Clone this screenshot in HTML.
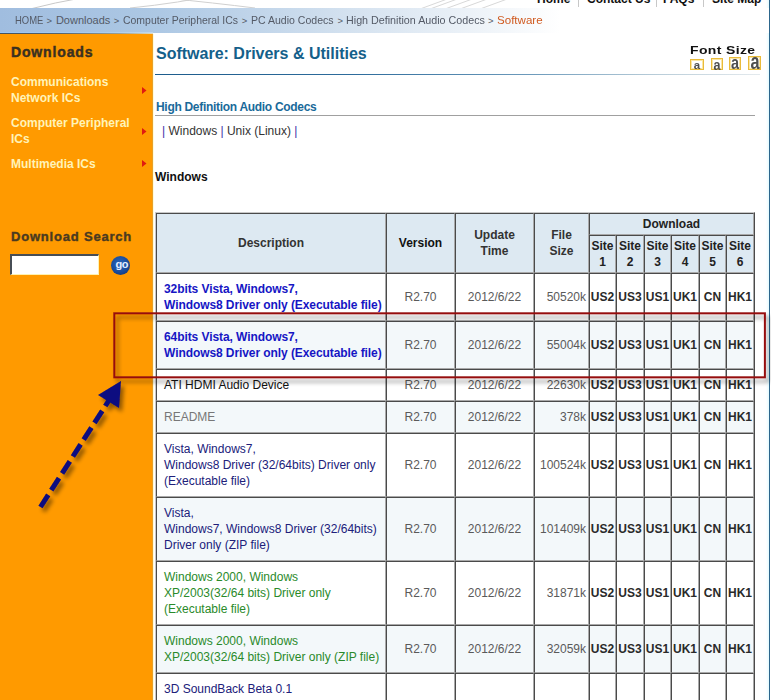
<!DOCTYPE html>
<html><head><meta charset="utf-8">
<style>
html,body{margin:0;padding:0;background:#fff;}
body{width:771px;height:700px;overflow:hidden;position:relative;font-family:"Liberation Sans",sans-serif;}
.a{position:absolute;white-space:nowrap;}
.bc{top:13px;font-size:11px;line-height:14px;color:#545a66;}
.c{position:absolute;box-sizing:border-box;border-style:solid;border-width:1px;border-color:#4a4a4a #a9a9a9 #a9a9a9 #4a4a4a;display:flex;align-items:center;justify-content:center;overflow:hidden;}
.hd{font-size:12px;font-weight:bold;line-height:16px;text-align:center;white-space:nowrap;}
.bd{font-size:12px;line-height:16px;white-space:nowrap;}
.g{color:#5a5a5a;}
.st{font-size:12px;font-weight:bold;line-height:16px;color:#2a2a2a;}
#side{position:absolute;left:0;top:34px;width:153px;height:666px;background:#ff9a00;}
.menu{position:absolute;left:11px;font-size:12px;font-weight:bold;line-height:16px;color:#fff3b8;white-space:nowrap;}
.tri{position:absolute;left:142px;width:0;height:0;border-top:3.5px solid transparent;border-bottom:3.5px solid transparent;border-left:4px solid #e02010;}
</style></head>
<body>
<!-- decorative top curves -->
<svg class="a" style="left:0;top:0" width="771" height="9" viewBox="0 0 771 9">
  <path d="M30 9 Q 80 -4 140 -10" stroke="#c8c8c8" stroke-width="1" fill="none"/>
  <path d="M130 8 Q 180 3 220 -6" stroke="#d0d0d0" stroke-width="1" fill="none"/>
  <path d="M165 -2 Q 215 3 255 8" stroke="#d0d0d0" stroke-width="1" fill="none"/>
  <path d="M420 9 L 450 -2 M430 9 L 460 -2 M445 9 L 475 -2 M460 9 L 490 -2 M480 9 L 510 -2" stroke="#d8d8d8" stroke-width="1" fill="none"/>
</svg>
<!-- top nav -->
<div class="a" style="left:537px;top:-8px;font-size:12px;font-weight:bold;line-height:14px;color:#111;">Home</div>
<div class="a" style="left:578px;top:0;width:1px;height:7px;background:#c8c8c8"></div>
<div class="a" style="left:587px;top:-8px;font-size:12px;font-weight:bold;line-height:14px;color:#111;">Contact Us</div>
<div class="a" style="left:656px;top:0;width:1px;height:7px;background:#c8c8c8"></div>
<div class="a" style="left:663px;top:-8px;font-size:12px;font-weight:bold;line-height:14px;color:#111;">FAQs</div>
<div class="a" style="left:703px;top:0;width:1px;height:7px;background:#c8c8c8"></div>
<div class="a" style="left:712px;top:-8px;font-size:12px;font-weight:bold;line-height:14px;color:#111;">Site Map</div>
<!-- right blue rule -->
<div class="a" style="left:766px;top:0;width:3px;height:700px;background:linear-gradient(90deg,#ffffff,#e4fbff)"></div>
<div class="a" style="left:769px;top:0;width:1px;height:700px;background:#2c668c"></div>
<!-- breadcrumb bar -->
<div class="a" style="left:0;top:8px;width:769px;height:25px;background:linear-gradient(90deg,#a0bddf 0px,#adc8e4 160px,#d6e3f0 360px,#f2f6fa 500px,#ffffff 560px);"></div>
<div class="a" style="left:0;top:32px;width:153px;height:1px;background:linear-gradient(90deg,#98c6f4 0,#a8cdf0 100px,#c0d8ee 153px)"></div>
<div class="a" style="left:0;top:33px;width:153px;height:1px;background:linear-gradient(90deg,#46525c 0,#58646c 60px,#9aa098 120px,#e0dcc0 153px)"></div>
<div class="a bc" style="left:15.0px;transform:scaleX(0.86);transform-origin:left;">HOME</div>
<div class="a bc" style="left:55.9px;transform:scaleX(1.0);transform-origin:left;">Downloads</div>
<div class="a bc" style="left:122.7px;transform:scaleX(0.95);transform-origin:left;">Computer Peripheral ICs</div>
<div class="a bc" style="left:250.5px;transform:scaleX(0.958);transform-origin:left;">PC Audio Codecs</div>
<div class="a bc" style="left:346.2px;transform:scaleX(0.975);transform-origin:left;">High Definition Audio Codecs</div>
<div class="a bc" style="left:46.4px;top:14px;font-size:9.5px;">&gt;</div>
<div class="a bc" style="left:113.7px;top:14px;font-size:9.5px;">&gt;</div>
<div class="a bc" style="left:241.7px;top:14px;font-size:9.5px;">&gt;</div>
<div class="a bc" style="left:337.4px;top:14px;font-size:9.5px;">&gt;</div>
<div class="a bc" style="left:487.9px;top:14px;font-size:9.5px;">&gt;</div>
<div class="a bc" style="left:496.8px;color:#d05a20;transform:scaleX(1.05);transform-origin:left;">Software</div>

<!-- sidebar -->
<div id="side"></div>
<div class="a" style="left:152px;top:34px;width:1px;height:666px;background:#e8a02a"></div>
<div class="a" style="left:153px;top:34px;width:1px;height:666px;background:#fffbd8"></div>
<div class="a" style="left:11px;top:44px;font-size:14px;font-weight:bold;line-height:16px;color:#3a3020;letter-spacing:0.85px;-webkit-text-stroke:0.45px #3a3020;">Downloads</div>
<div class="menu" style="top:74px">Communications<br>Network ICs</div>
<div class="menu" style="top:115px">Computer Peripheral<br>ICs</div>
<div class="menu" style="top:156px">Multimedia ICs</div>
<svg class="a" style="left:0;top:0" width="153" height="180"><polygon points="142,87 146.5,90.5 142,94" fill="#e01a10"/><polygon points="142,128 146.5,131.5 142,135" fill="#e01a10"/><polygon points="142,160 146.5,163.5 142,167" fill="#e01a10"/></svg>
<div class="a" style="left:11px;top:229px;font-size:13px;font-weight:bold;line-height:16px;color:#4a3a20;letter-spacing:0.8px;-webkit-text-stroke:0.4px #4a3a20;">Download Search</div>
<div class="a" style="left:10px;top:254px;width:89px;height:21px;box-sizing:border-box;background:#fff;border-style:solid;border-width:2px 1px 1px 2px;border-color:#474d55 #fff2b0 #fff2b0 #474d55;"></div>
<div class="a" style="left:111px;top:255.5px;width:19px;height:19px;border-radius:50%;background:radial-gradient(circle at 45% 40%,#2a66ba 0,#1a4c9c 55%,#0a2a62 100%);"></div>
<div class="a" style="left:115.5px;top:257px;font-size:11px;font-weight:bold;line-height:14px;color:#e4eeff;letter-spacing:-0.4px;">go</div>

<!-- main heading -->
<div class="a" style="left:156px;top:45px;font-size:16px;font-weight:bold;line-height:18px;color:#14608a;">Software: Drivers &amp; Utilities</div>
<div class="a" style="left:155px;top:74px;width:605px;height:1px;background:linear-gradient(90deg,#1d5c8c 0,#2e6c9c 200px,#6f9cbc 380px,#b8ccd8 500px,#e4eaee 605px);"></div>
<div class="a" style="left:690px;top:44px;font-size:11px;font-weight:bold;line-height:13px;color:#111;letter-spacing:0.3px;transform:scaleX(1.27);transform-origin:left;">Font Size</div>
<div class="a" style="left:690px;top:59px;width:14px;height:11px;box-sizing:border-box;border:1px solid #e9bb3a;box-shadow:inset 0 0 0 1px #fbe6a4;background:#fff;"></div>
<div class="a" style="left:711px;top:58px;width:12px;height:12px;box-sizing:border-box;border:1px solid #e9bb3a;box-shadow:inset 0 0 0 1px #fbe6a4;background:#fff;"></div>
<div class="a" style="left:729px;top:57px;width:12px;height:13px;box-sizing:border-box;border:1px solid #e9bb3a;box-shadow:inset 0 0 0 1px #fbe6a4;background:#fff;"></div>
<div class="a" style="left:748px;top:56px;width:13px;height:14px;box-sizing:border-box;border:1px solid #e9bb3a;box-shadow:inset 0 0 0 1px #fbe6a4;background:#fff;"></div>
<div class="a" style="left:681.5px;top:60.7px;width:30px;text-align:center;font-size:10px;font-weight:bold;line-height:1;color:#4e4e4e;transform:scaleX(1.15);">a</div>
<div class="a" style="left:702px;top:56.5px;width:30px;text-align:center;font-size:15px;font-weight:bold;line-height:1;color:#4e4e4e;transform:scaleX(0.84);">a</div>
<div class="a" style="left:720px;top:53.1px;width:30px;text-align:center;font-size:19px;font-weight:bold;line-height:1;color:#4e4e4e;transform:scaleX(0.76);">a</div>
<div class="a" style="left:739.5px;top:50.6px;width:30px;text-align:center;font-size:22px;font-weight:bold;line-height:1;color:#4e4e4e;transform:scaleX(0.74);">a</div>

<div class="a" style="left:156px;top:99px;font-size:12px;font-weight:bold;line-height:16px;color:#1a6a9a;letter-spacing:-0.3px;">High Definition Audio Codecs</div>
<div class="a" style="left:155px;top:115px;width:600px;height:1px;background:#a0a0a0"></div>
<div class="a" style="left:162px;top:123px;font-size:12px;line-height:16px;color:#333;"><span style="color:#4030a8">|</span> Windows <span style="color:#4030a8">|</span> Unix (Linux) <span style="color:#4030a8">|</span></div>
<div class="a" style="left:155px;top:169px;font-size:12px;font-weight:bold;line-height:16px;color:#111;">Windows</div>

<!-- table -->
<div class="a" style="left:155px;top:212px;width:600px;height:500px;box-sizing:border-box;border-style:solid;border-width:1px;border-color:#c8c8c8 #4a4a4a #4a4a4a #c8c8c8;"></div>
<div class="c" style="left:156px;top:213px;width:230px;height:60px;background:#dde9f2;"><span class="hd" style="color:#333">Description</span></div>
<div class="c" style="left:386px;top:213px;width:69px;height:60px;background:#dde9f2;"><span class="hd" style="color:#111">Version</span></div>
<div class="c" style="left:455px;top:213px;width:79px;height:60px;background:#dde9f2;"><span class="hd" style="color:#333">Update<br>Time</span></div>
<div class="c" style="left:534px;top:213px;width:55px;height:60px;background:#dde9f2;"><span class="hd" style="color:#333">File<br>Size</span></div>
<div class="c" style="left:589px;top:213px;width:165px;height:22px;background:#dde9f2;"><span class="hd" style="color:#222">Download</span></div>
<div class="c" style="left:589px;top:235px;width:27px;height:38px;background:#dde9f2;"><span class="hd" style="color:#222">Site<br>1</span></div>
<div class="c" style="left:616px;top:235px;width:28px;height:38px;background:#dde9f2;"><span class="hd" style="color:#222">Site<br>2</span></div>
<div class="c" style="left:644px;top:235px;width:27px;height:38px;background:#dde9f2;"><span class="hd" style="color:#222">Site<br>3</span></div>
<div class="c" style="left:671px;top:235px;width:28px;height:38px;background:#dde9f2;"><span class="hd" style="color:#222">Site<br>4</span></div>
<div class="c" style="left:699px;top:235px;width:27px;height:38px;background:#dde9f2;"><span class="hd" style="color:#222">Site<br>5</span></div>
<div class="c" style="left:726px;top:235px;width:28px;height:38px;background:#dde9f2;"><span class="hd" style="color:#222">Site<br>6</span></div>
<div class="c" style="left:156px;top:273px;width:230px;height:48px;background:#ffffff;justify-content:flex-start;padding-left:7px;"><span class="bd" style="color:#1616c4;font-weight:bold;letter-spacing:-0.08px">32bits Vista, Windows7,<br>Windows8 Driver only (Executable file)</span></div>
<div class="c" style="left:386px;top:273px;width:69px;height:48px;background:#ffffff;"><span class="bd g">R2.70</span></div>
<div class="c" style="left:455px;top:273px;width:79px;height:48px;background:#ffffff;"><span class="bd g">2012/6/22</span></div>
<div class="c" style="left:534px;top:273px;width:55px;height:48px;background:#ffffff;justify-content:flex-end;padding-right:2px;"><span class="bd g">50520k</span></div>
<div class="c" style="left:589px;top:273px;width:27px;height:48px;background:#ffffff;"><span class="st">US2</span></div>
<div class="c" style="left:616px;top:273px;width:28px;height:48px;background:#ffffff;"><span class="st">US3</span></div>
<div class="c" style="left:644px;top:273px;width:27px;height:48px;background:#ffffff;"><span class="st">US1</span></div>
<div class="c" style="left:671px;top:273px;width:28px;height:48px;background:#ffffff;"><span class="st">UK1</span></div>
<div class="c" style="left:699px;top:273px;width:27px;height:48px;background:#ffffff;"><span class="st">CN</span></div>
<div class="c" style="left:726px;top:273px;width:28px;height:48px;background:#ffffff;"><span class="st">HK1</span></div>
<div class="c" style="left:156px;top:321px;width:230px;height:48px;background:#f3f8fa;justify-content:flex-start;padding-left:7px;"><span class="bd" style="color:#1616c4;font-weight:bold;letter-spacing:-0.08px">64bits Vista, Windows7,<br>Windows8 Driver only (Executable file)</span></div>
<div class="c" style="left:386px;top:321px;width:69px;height:48px;background:#f3f8fa;"><span class="bd g">R2.70</span></div>
<div class="c" style="left:455px;top:321px;width:79px;height:48px;background:#f3f8fa;"><span class="bd g">2012/6/22</span></div>
<div class="c" style="left:534px;top:321px;width:55px;height:48px;background:#f3f8fa;justify-content:flex-end;padding-right:2px;"><span class="bd g">55004k</span></div>
<div class="c" style="left:589px;top:321px;width:27px;height:48px;background:#f3f8fa;"><span class="st">US2</span></div>
<div class="c" style="left:616px;top:321px;width:28px;height:48px;background:#f3f8fa;"><span class="st">US3</span></div>
<div class="c" style="left:644px;top:321px;width:27px;height:48px;background:#f3f8fa;"><span class="st">US1</span></div>
<div class="c" style="left:671px;top:321px;width:28px;height:48px;background:#f3f8fa;"><span class="st">UK1</span></div>
<div class="c" style="left:699px;top:321px;width:27px;height:48px;background:#f3f8fa;"><span class="st">CN</span></div>
<div class="c" style="left:726px;top:321px;width:28px;height:48px;background:#f3f8fa;"><span class="st">HK1</span></div>
<div class="c" style="left:156px;top:369px;width:230px;height:32px;background:#ffffff;justify-content:flex-start;padding-left:7px;"><span class="bd" style="color:#111">ATI HDMI Audio Device</span></div>
<div class="c" style="left:386px;top:369px;width:69px;height:32px;background:#ffffff;"><span class="bd g">R2.70</span></div>
<div class="c" style="left:455px;top:369px;width:79px;height:32px;background:#ffffff;"><span class="bd g">2012/6/22</span></div>
<div class="c" style="left:534px;top:369px;width:55px;height:32px;background:#ffffff;justify-content:flex-end;padding-right:2px;"><span class="bd g">22630k</span></div>
<div class="c" style="left:589px;top:369px;width:27px;height:32px;background:#ffffff;"><span class="st">US2</span></div>
<div class="c" style="left:616px;top:369px;width:28px;height:32px;background:#ffffff;"><span class="st">US3</span></div>
<div class="c" style="left:644px;top:369px;width:27px;height:32px;background:#ffffff;"><span class="st">US1</span></div>
<div class="c" style="left:671px;top:369px;width:28px;height:32px;background:#ffffff;"><span class="st">UK1</span></div>
<div class="c" style="left:699px;top:369px;width:27px;height:32px;background:#ffffff;"><span class="st">CN</span></div>
<div class="c" style="left:726px;top:369px;width:28px;height:32px;background:#ffffff;"><span class="st">HK1</span></div>
<div class="c" style="left:156px;top:401px;width:230px;height:32px;background:#f3f8fa;justify-content:flex-start;padding-left:7px;"><span class="bd" style="color:#777">README</span></div>
<div class="c" style="left:386px;top:401px;width:69px;height:32px;background:#f3f8fa;"><span class="bd g">R2.70</span></div>
<div class="c" style="left:455px;top:401px;width:79px;height:32px;background:#f3f8fa;"><span class="bd g">2012/6/22</span></div>
<div class="c" style="left:534px;top:401px;width:55px;height:32px;background:#f3f8fa;justify-content:flex-end;padding-right:2px;"><span class="bd g">378k</span></div>
<div class="c" style="left:589px;top:401px;width:27px;height:32px;background:#f3f8fa;"><span class="st">US2</span></div>
<div class="c" style="left:616px;top:401px;width:28px;height:32px;background:#f3f8fa;"><span class="st">US3</span></div>
<div class="c" style="left:644px;top:401px;width:27px;height:32px;background:#f3f8fa;"><span class="st">US1</span></div>
<div class="c" style="left:671px;top:401px;width:28px;height:32px;background:#f3f8fa;"><span class="st">UK1</span></div>
<div class="c" style="left:699px;top:401px;width:27px;height:32px;background:#f3f8fa;"><span class="st">CN</span></div>
<div class="c" style="left:726px;top:401px;width:28px;height:32px;background:#f3f8fa;"><span class="st">HK1</span></div>
<div class="c" style="left:156px;top:433px;width:230px;height:64px;background:#ffffff;justify-content:flex-start;padding-left:7px;"><span class="bd" style="color:#20207a">Vista, Windows7,<br>Windows8 Driver (32/64bits) Driver only<br>(Executable file)</span></div>
<div class="c" style="left:386px;top:433px;width:69px;height:64px;background:#ffffff;"><span class="bd g">R2.70</span></div>
<div class="c" style="left:455px;top:433px;width:79px;height:64px;background:#ffffff;"><span class="bd g">2012/6/22</span></div>
<div class="c" style="left:534px;top:433px;width:55px;height:64px;background:#ffffff;justify-content:flex-end;padding-right:2px;"><span class="bd g">100524k</span></div>
<div class="c" style="left:589px;top:433px;width:27px;height:64px;background:#ffffff;"><span class="st">US2</span></div>
<div class="c" style="left:616px;top:433px;width:28px;height:64px;background:#ffffff;"><span class="st">US3</span></div>
<div class="c" style="left:644px;top:433px;width:27px;height:64px;background:#ffffff;"><span class="st">US1</span></div>
<div class="c" style="left:671px;top:433px;width:28px;height:64px;background:#ffffff;"><span class="st">UK1</span></div>
<div class="c" style="left:699px;top:433px;width:27px;height:64px;background:#ffffff;"><span class="st">CN</span></div>
<div class="c" style="left:726px;top:433px;width:28px;height:64px;background:#ffffff;"><span class="st">HK1</span></div>
<div class="c" style="left:156px;top:497px;width:230px;height:64px;background:#f3f8fa;justify-content:flex-start;padding-left:7px;"><span class="bd" style="color:#20207a">Vista,<br>Windows7, Windows8 Driver (32/64bits)<br>Driver only (ZIP file)</span></div>
<div class="c" style="left:386px;top:497px;width:69px;height:64px;background:#f3f8fa;"><span class="bd g">R2.70</span></div>
<div class="c" style="left:455px;top:497px;width:79px;height:64px;background:#f3f8fa;"><span class="bd g">2012/6/22</span></div>
<div class="c" style="left:534px;top:497px;width:55px;height:64px;background:#f3f8fa;justify-content:flex-end;padding-right:2px;"><span class="bd g">101409k</span></div>
<div class="c" style="left:589px;top:497px;width:27px;height:64px;background:#f3f8fa;"><span class="st">US2</span></div>
<div class="c" style="left:616px;top:497px;width:28px;height:64px;background:#f3f8fa;"><span class="st">US3</span></div>
<div class="c" style="left:644px;top:497px;width:27px;height:64px;background:#f3f8fa;"><span class="st">US1</span></div>
<div class="c" style="left:671px;top:497px;width:28px;height:64px;background:#f3f8fa;"><span class="st">UK1</span></div>
<div class="c" style="left:699px;top:497px;width:27px;height:64px;background:#f3f8fa;"><span class="st">CN</span></div>
<div class="c" style="left:726px;top:497px;width:28px;height:64px;background:#f3f8fa;"><span class="st">HK1</span></div>
<div class="c" style="left:156px;top:561px;width:230px;height:64px;background:#ffffff;justify-content:flex-start;padding-left:7px;"><span class="bd" style="color:#2a8a2a">Windows 2000, Windows<br>XP/2003(32/64 bits) Driver only<br>(Executable file)</span></div>
<div class="c" style="left:386px;top:561px;width:69px;height:64px;background:#ffffff;"><span class="bd g">R2.70</span></div>
<div class="c" style="left:455px;top:561px;width:79px;height:64px;background:#ffffff;"><span class="bd g">2012/6/22</span></div>
<div class="c" style="left:534px;top:561px;width:55px;height:64px;background:#ffffff;justify-content:flex-end;padding-right:2px;"><span class="bd g">31871k</span></div>
<div class="c" style="left:589px;top:561px;width:27px;height:64px;background:#ffffff;"><span class="st">US2</span></div>
<div class="c" style="left:616px;top:561px;width:28px;height:64px;background:#ffffff;"><span class="st">US3</span></div>
<div class="c" style="left:644px;top:561px;width:27px;height:64px;background:#ffffff;"><span class="st">US1</span></div>
<div class="c" style="left:671px;top:561px;width:28px;height:64px;background:#ffffff;"><span class="st">UK1</span></div>
<div class="c" style="left:699px;top:561px;width:27px;height:64px;background:#ffffff;"><span class="st">CN</span></div>
<div class="c" style="left:726px;top:561px;width:28px;height:64px;background:#ffffff;"><span class="st">HK1</span></div>
<div class="c" style="left:156px;top:625px;width:230px;height:48px;background:#f3f8fa;justify-content:flex-start;padding-left:7px;"><span class="bd" style="color:#2a8a2a">Windows 2000, Windows<br>XP/2003(32/64 bits) Driver only (ZIP file)</span></div>
<div class="c" style="left:386px;top:625px;width:69px;height:48px;background:#f3f8fa;"><span class="bd g">R2.70</span></div>
<div class="c" style="left:455px;top:625px;width:79px;height:48px;background:#f3f8fa;"><span class="bd g">2012/6/22</span></div>
<div class="c" style="left:534px;top:625px;width:55px;height:48px;background:#f3f8fa;justify-content:flex-end;padding-right:2px;"><span class="bd g">32059k</span></div>
<div class="c" style="left:589px;top:625px;width:27px;height:48px;background:#f3f8fa;"><span class="st">US2</span></div>
<div class="c" style="left:616px;top:625px;width:28px;height:48px;background:#f3f8fa;"><span class="st">US3</span></div>
<div class="c" style="left:644px;top:625px;width:27px;height:48px;background:#f3f8fa;"><span class="st">US1</span></div>
<div class="c" style="left:671px;top:625px;width:28px;height:48px;background:#f3f8fa;"><span class="st">UK1</span></div>
<div class="c" style="left:699px;top:625px;width:27px;height:48px;background:#f3f8fa;"><span class="st">CN</span></div>
<div class="c" style="left:726px;top:625px;width:28px;height:48px;background:#f3f8fa;"><span class="st">HK1</span></div>
<div class="c" style="left:156px;top:673px;width:230px;height:48px;background:#ffffff;justify-content:flex-start;padding-left:7px;"><span class="bd" style="color:#20207a">3D SoundBack Beta 0.1<br>&nbsp;</span></div>
<div class="c" style="left:386px;top:673px;width:69px;height:48px;background:#ffffff;"></div>
<div class="c" style="left:455px;top:673px;width:79px;height:48px;background:#ffffff;"></div>
<div class="c" style="left:534px;top:673px;width:55px;height:48px;background:#ffffff;"></div>
<div class="c" style="left:589px;top:673px;width:27px;height:48px;background:#ffffff;"></div>
<div class="c" style="left:616px;top:673px;width:28px;height:48px;background:#ffffff;"></div>
<div class="c" style="left:644px;top:673px;width:27px;height:48px;background:#ffffff;"></div>
<div class="c" style="left:671px;top:673px;width:28px;height:48px;background:#ffffff;"></div>
<div class="c" style="left:699px;top:673px;width:27px;height:48px;background:#ffffff;"></div>
<div class="c" style="left:726px;top:673px;width:28px;height:48px;background:#ffffff;"></div>

<!-- overlay: red rectangle + arrow -->
<svg class="a" style="left:0;top:0" width="771" height="700" viewBox="0 0 771 700">
  <defs>
    <filter id="sh" x="-20%" y="-20%" width="140%" height="140%">
      <feGaussianBlur in="SourceAlpha" stdDeviation="2"/>
      <feOffset dx="3" dy="4" result="b"/>
      <feComponentTransfer><feFuncA type="linear" slope="0.45"/></feComponentTransfer>
      <feMerge><feMergeNode/><feMergeNode in="SourceGraphic"/></feMerge>
    </filter>
  </defs>
  <g filter="url(#sh)">
    <rect x="114.3" y="313.3" width="650.6" height="64" fill="none" stroke="#960a0c" stroke-width="2"/>
  </g>
  <g filter="url(#sh)">
    <line x1="40.5" y1="507" x2="113" y2="394" stroke="#0a0a80" stroke-width="5" stroke-dasharray="14.3 5.7"/>
    <polygon points="121,381 98,395 119,408" fill="#0a0a80"/>
  </g>
</svg>
</body></html>
